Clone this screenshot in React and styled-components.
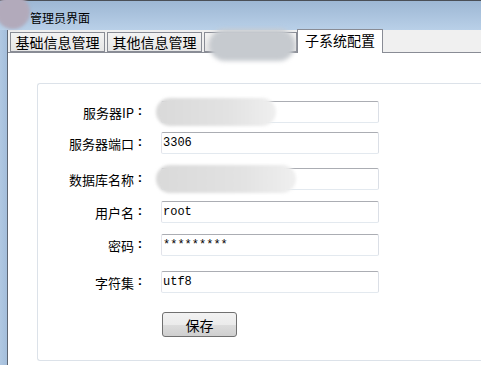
import React from "react";
import styled, { createGlobalStyle } from "styled-components";

const Global = createGlobalStyle`
  html, body { margin: 0; padding: 0; background: #ffffff; }
  body { font-family: "Noto Sans CJK SC", "Liberation Sans", sans-serif; }
`;

const Window = styled.div`
  width: 481px;
  height: 365px;
  display: flex;
  flex-direction: column;
  overflow: hidden;
  background: #ffffff;
`;

const TitleBar = styled.div`
  height: 30px;
  box-sizing: border-box;
  border-top: 1px solid #4a4f57;
  background: linear-gradient(#9db7d4, #b9d0e8);
  display: flex;
  align-items: center;
  position: relative;
  padding-left: 30px;
  padding-top: 4px;
`;

const IconBlur = styled.span`
  position: absolute;
  left: -4px;
  top: -6px;
  width: 34px;
  height: 34px;
  border-radius: 50%;
  background: #b2aabb;
  filter: blur(1.5px);
`;

const Title = styled.span`
  font-size: 12px;
  color: #000;
  line-height: 14px;
`;

const Body = styled.div`
  flex: 1;
  display: flex;
  min-height: 0;
`;

const LeftFrame = styled.div`
  width: 7px;
  background: linear-gradient(90deg, #b0c8e2, #a4bedb);
  border-right: 1px solid #5d6673;
`;

const Main = styled.div`
  flex: 1;
  display: flex;
  flex-direction: column;
  min-width: 0;
`;

const TabStrip = styled.div`
  height: 22px;
  background: #f0f0f0;
  border-bottom: 1px solid #898c95;
  display: flex;
  align-items: flex-end;
  padding-left: 2px;
  gap: 2px;
`;

const Tab = styled.div`
  position: relative;
  box-sizing: border-box;
  height: ${(p) => (p.$active ? "24px" : "20px")};
  margin-bottom: ${(p) => (p.$active ? "-1px" : "0")};
  margin-left: ${(p) => (p.$active ? "-2px" : "0")};
  width: ${(p) => p.$w}px;
  border: 1px solid #898c95;
  border-bottom: ${(p) => (p.$active ? "none" : "1px solid #898c95")};
  background: ${(p) => (p.$active ? "#ffffff" : "linear-gradient(#f3f3f3, #e6e6e6)")};
  font-size: 14px;
  line-height: 18px;
  color: #000;
  text-align: center;
  white-space: nowrap;
  padding-top: ${(p) => (p.$active ? "1px" : "0")};
  z-index: ${(p) => (p.$active ? 1 : 0)};
`;

const TabBlur = styled.span`
  position: absolute;
  left: 4px;
  top: -4px;
  width: 86px;
  height: 32px;
  border-radius: 16px;
  background: #c6cacf;
  filter: blur(2px);
`;

const Content = styled.div`
  flex: 1;
  background: #ffffff;
  padding: 30px 0 4px 29px;
  display: flex;
  min-height: 0;
`;

const Panel = styled.div`
  flex: 1;
  border: 1px solid #dce2e9;
  border-right: none;
  border-radius: 3px 0 0 3px;
  padding-top: 17px;
  display: flex;
  flex-direction: column;
`;

const Row = styled.div`
  display: flex;
  align-items: center;
  margin-top: ${(p) => p.$top}px;
  gap: 15px;
`;

const Label = styled.label`
  width: 108px;
  display: flex;
  justify-content: flex-end;
  font-size: 13px;
  color: #000;
  white-space: nowrap;
`;

const Colon = styled.span`
  width: 12px;
  text-align: center;
  font-family: "Liberation Sans", sans-serif;
  font-weight: bold;
`;

const Field = styled.div`
  position: relative;
  box-sizing: border-box;
  width: 218px;
  height: 22px;
  border: 1px solid;
  border-color: #abadb3 #dbdfe6 #e3e9ef #e2e3ea;
  border-radius: 2px;
  background: #fff;
  font-family: "Liberation Mono", "DejaVu Sans Mono", monospace;
  font-size: 12px;
  line-height: 20px;
  padding-left: 1px;
  color: #000;
`;

const FieldBlur = styled.span`
  position: absolute;
  left: -6px;
  top: -4px;
  width: ${(p) => p.$w}px;
  height: 28px;
  border-radius: 14px;
  background: linear-gradient(90deg, #d9d9d9, #e2e2e2 60%, #efefef);
  filter: blur(1.5px);
`;

const Button = styled.button`
  margin-top: 19px;
  margin-left: 124px;
  width: 75px;
  height: 25px;
  box-sizing: border-box;
  border: 1px solid #707070;
  border-radius: 3px;
  background: linear-gradient(#f2f2f2 0%, #ebebeb 50%, #dddddd 51%, #cfcfcf 100%);
  font-family: "Noto Sans CJK SC", sans-serif;
  font-size: 14px;
  color: #000;
  padding: 0;
  line-height: 22px;
`;

const rows = [
  { label: "服务器IP", top: 0, blur: 120 },
  { label: "服务器端口", top: 9, value: "3306" },
  { label: "数据库名称", top: 14, blur: 140 },
  { label: "用户名", top: 11, value: "root" },
  { label: "密码", top: 11, value: "*********" },
  { label: "字符集", top: 15, value: "utf8" },
];

export default function App() {
  return (
    <Window>
      <Global />
      <TitleBar>
        <IconBlur />
        <Title>管理员界面</Title>
      </TitleBar>
      <Body>
        <LeftFrame />
        <Main>
          <TabStrip>
            <Tab $w={95}>基础信息管理</Tab>
            <Tab $w={95}>其他信息管理</Tab>
            <Tab $w={93}>
              <TabBlur />
            </Tab>
            <Tab $w={86} $active>子系统配置</Tab>
          </TabStrip>
          <Content>
            <Panel>
              {rows.map((r) => (
                <Row key={r.label} $top={r.top}>
                  <Label>
                    {r.label}
                    <Colon>:</Colon>
                  </Label>
                  <Field>
                    {r.value}
                    {r.blur ? <FieldBlur $w={r.blur} /> : null}
                  </Field>
                </Row>
              ))}
              <Button>保存</Button>
            </Panel>
          </Content>
        </Main>
      </Body>
    </Window>
  );
}
